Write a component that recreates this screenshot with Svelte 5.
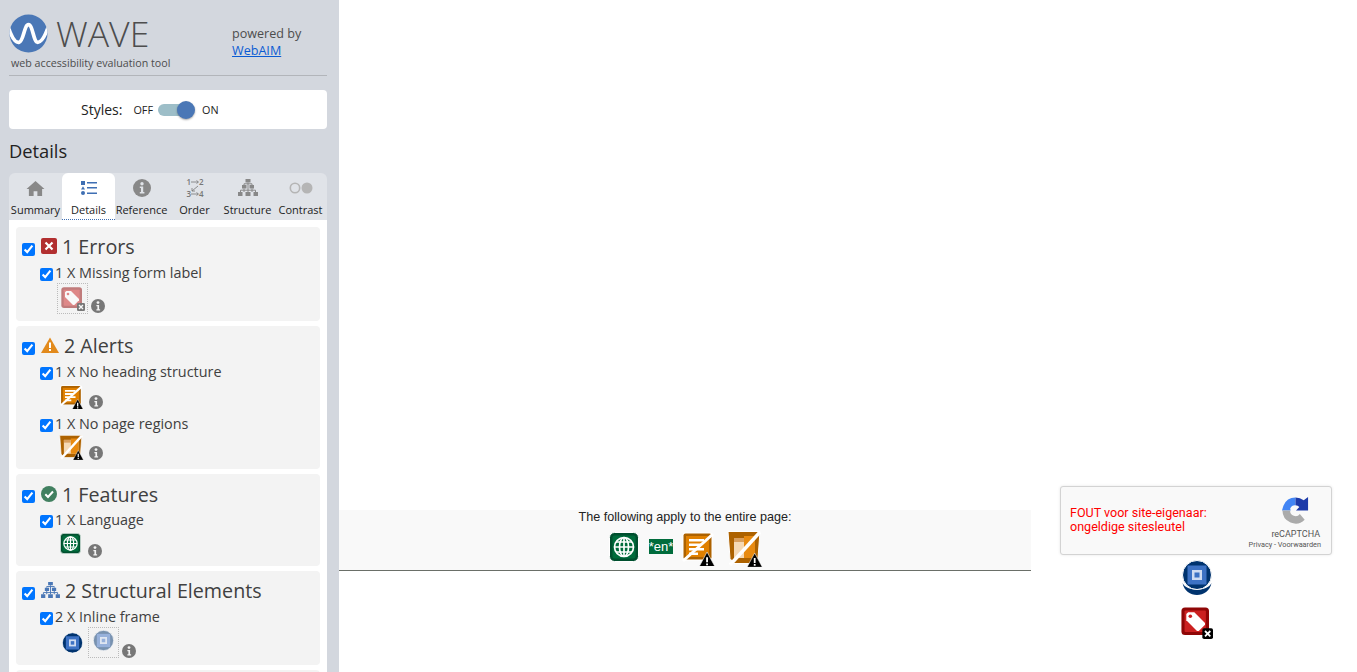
<script>
  const tabs = ["Summary", "Details", "Reference", "Order", "Structure", "Contrast"];
</script>

{#snippet info()}
  <svg class="info" viewBox="0 0 14 14" width="14" height="14" aria-hidden="true">
    <circle cx="7" cy="7" r="7" fill="#777" />
    <circle cx="7" cy="3.600" r="1.400" fill="#f3f3f3" />
    <path d="M5.400 6h2.700v4.200h1v1.300H5.400v-1.300h1V7.300h-1z" fill="#f3f3f3" />
  </svg>
{/snippet}

{#snippet globe(size)}
  <svg viewBox="0 0 30 30" width={size} height={size} aria-hidden="true">
    <rect x="0.500" y="0.500" width="29" height="29" rx="5" fill="#00502f" stroke="#fff" />
    <rect x="3.500" y="3.500" width="23" height="23" rx="2" fill="#006c3c" />
    <g fill="none" stroke="#fff" stroke-width="1.700">
      <circle cx="15" cy="15" r="9.500" />
      <ellipse cx="15" cy="15" rx="4.500" ry="9.500" />
      <path d="M15 5.500v19M5.500 15h19M7 10h16M7 20h16" />
    </g>
  </svg>
{/snippet}

{#snippet warn(x, y, s)}
  <g transform="translate({x} {y}) scale({s})">
    <path d="M7 0 14 13H0z" fill="#000" stroke="#fff" stroke-width="0.500" />
    <path d="M6.200 4.500h1.600v4.500H6.200zM6.200 10h1.600v1.500H6.200z" fill="#fff" />
  </g>
{/snippet}

{#snippet heading(w)}
  <svg viewBox="0 0 34 34" width={w} height={w} aria-hidden="true">
    <rect x="0.500" y="0.500" width="30" height="28" rx="3" fill="#fff" />
    <rect x="1.500" y="1.500" width="28" height="26" rx="2" fill="#ad6200" />
    <rect x="4" y="4" width="23" height="21" fill="#e08000" />
    <path d="M7 7h15v2.500H7zM7 11.500h12V14H7zM7 16h15v2.500H7zM7 20.500h9V23H7z" fill="#fff" />
    <path d="M1 29 31 2" stroke="#fff" stroke-width="3" />
    {@render warn(17, 20, 1.150)}
  </svg>
{/snippet}

{#snippet regions(w)}
  <svg viewBox="0 0 36 36" width={w} height={w} aria-hidden="true">
    <path d="M1 0.500h32l-2 27-4 5H7l-4-5z" fill="#ad6200" stroke="#fff" />
    <path d="M7 7h21v20H7z" fill="#f5d9b5" />
    <path d="M17 5h11v22H17z" fill="#e88a10" />
    <path d="M7 7h10v4H7z" fill="#d9a060" />
    <path d="M3 34 33 1" stroke="#fff" stroke-width="3.500" />
    {@render warn(20, 22, 1.100)}
  </svg>
{/snippet}

{#snippet iframe(w, shadow = false, faded = false)}
  <svg class:faded viewBox="0 0 30 36" width={w} aria-hidden="true">
    {#if shadow}
      <path d="M0.500 23c3 16 26 16 29 0-4 9-25 9-29 0z" fill="#00336e" />
    {/if}
    <circle cx="15" cy="15" r="14.500" fill="#00336e" stroke="#fff" />
    <rect x="5.500" y="5.500" width="19" height="19" fill="#3d72c4" />
    <rect x="10" y="10" width="10" height="10" fill="#cfdcf2" />
    <rect x="12.500" y="12.500" width="5" height="5" fill="#3d72c4" />
  </svg>
{/snippet}

{#snippet tag(w, small = false)}
  <svg class:faded={small} viewBox="0 0 36 36" width={w} height={w} aria-hidden="true">
    <rect x="0.500" y="0.500" width="31" height="31" rx="4" fill="#8f0606" />
    <rect x="4" y="4" width="24" height="24" rx="1" fill="#cb2020" />
    <path d="M6 8 8 6h7l12 12v2l-7 7h-2L6 15z" fill="#fff" />
    <circle cx="10.500" cy="10.500" r="2" fill="#cb2020" />
    <rect x="24" y="24" width="12" height="12" rx="2" fill="#000" />
    <path d="M27 27l6 6M33 27l-6 6" stroke="#fff" stroke-width="2" />
  </svg>
{/snippet}

<div class="page">
  <aside class="sidebar">
    <header class="brand">
      <div class="logo">
        <div class="logo-row">
          <svg viewBox="0 0 40 40" width="39" height="39" aria-hidden="true">
            <defs><clipPath id="logo-clip"><circle cx="20" cy="20" r="19.500" /></clipPath></defs>
            <circle cx="20" cy="20" r="19.500" fill="#4a77b6" />
            <path clip-path="url(#logo-clip)" d="M-1 13C3 25 7 30 10.500 29C15 28 15.500 11 20 11C24.500 11 25 29 29.500 29C33 29 37 23 41 11" fill="none" stroke="#fff" stroke-width="3.800" />
          </svg>
          <span class="wave">WAVE</span>
        </div>
        <div class="tagline">web accessibility evaluation tool</div>
      </div>
      <div class="powered">powered by<br /><a href="#top">WebAIM</a></div>
    </header>

    <div class="styles-card">
      <span class="styles-label">Styles:</span>
      <span class="off">OFF</span>
      <span class="switch"><span class="knob"></span></span>
      <span class="on">ON</span>
    </div>

    <h2 class="details-title">Details</h2>

    <nav class="tabs">
      {#each tabs as t, i}
        <div class="tab" class:active={i === 1}>
          <span class="tab-icon">
            {#if i === 0}
              <svg viewBox="0 0 20 18" width="19" height="17" aria-hidden="true"><path d="M10 1 0.500 9.500H3V17h5v-5h4v5h5V9.500h2.500z" fill="#888" /></svg>
            {:else if i === 1}
              <svg viewBox="0 0 18 16" width="18" height="16" aria-hidden="true"><path d="M1 1h4v4H1zM7 2h10v1.500H7zM7 7h10v1.500H7zM7 12.500h10V14H7z" fill="#3f6fb3" /><path d="M3 6.200 5 9.500H1z" fill="#3f6fb3" /><circle cx="3" cy="13" r="2" fill="#3f6fb3" /></svg>
            {:else if i === 2}
              <svg viewBox="0 0 18 18" width="18" height="18" aria-hidden="true"><circle cx="9" cy="9" r="9" fill="#888" /><circle cx="9" cy="4.700" r="1.700" fill="#e0e3e8" /><path d="M6.800 7.500h3.400v5.500h1.200v1.500H6.800V13H8V9H6.800z" fill="#e0e3e8" /></svg>
            {:else if i === 3}
              <svg class="order-icon" viewBox="0 0 18 20" width="18" height="20" aria-hidden="true">
                <text x="0.500" y="6.500" class="ord">1</text><text x="13" y="6.500" class="ord">2</text>
                <text x="0.500" y="19" class="ord">3</text><text x="13" y="19" class="ord">4</text>
                <path d="M5 4h7M10.500 2.500 12.500 4 10.500 5.500M5 16h7M10.500 14.500 12.500 16 10.500 17.500M12 8l-6 5M6 10V13h3" fill="none" stroke="#777" stroke-width="0.800" />
              </svg>
            {:else if i === 4}
              <svg viewBox="0 0 20 18" width="20" height="18" aria-hidden="true"><path d="M7.500 0h5v3.500h-5zM4 6h4.500v3.500H4zM11.500 6H16v3.500h-4.500zM0 13h4.500v4H0zM7.500 13h5v4h-5zM15.500 13H20v4h-4.500z" fill="#888" /><path d="M10 3.500V13M6 9.500V13M14 9.500V13M2.500 13v-1.800h15V13M6 6V4.800h8V6" fill="none" stroke="#888" /></svg>
            {:else}
              <svg viewBox="0 0 24 12" width="24" height="12" aria-hidden="true"><circle cx="6" cy="6" r="4.700" fill="none" stroke="#b5b5b5" stroke-width="1.600" /><circle cx="18" cy="6" r="5.500" fill="#b5b5b5" /></svg>
            {/if}
          </span>
          <span class="tab-label">{t}</span>
        </div>
      {/each}
    </nav>

    <div class="panel">
      <section class="card card-errors">
        <h3><input type="checkbox" checked />
          <svg class="head-icon" viewBox="0 0 16 16" width="16" height="16" aria-hidden="true"><rect width="16" height="16" rx="2" fill="#b22f30" /><path d="M4.500 4.500l7 7M11.500 4.500l-7 7" stroke="#fff" stroke-width="2.200" /></svg>
          1 Errors</h3>
        <div class="row"><input type="checkbox" checked /><span>1 X Missing form label</span></div>
        <div class="icons first-icons">
          <span class="dotted">{@render tag(24, true)}</span>
          {@render info()}
        </div>
      </section>

      <section class="card card-alerts">
        <h3><input type="checkbox" checked />
          <svg class="head-icon" viewBox="0 0 18 16" width="18" height="16" aria-hidden="true"><path d="M9 0.500 18 16H0z" fill="#e28a1c" /><path d="M8 5.500h2v5.500H8zM8 12h2v2H8z" fill="#fff" /></svg>
          2 Alerts</h3>
        <div class="row"><input type="checkbox" checked /><span>1 X No heading structure</span></div>
        <div class="icons plain">{@render heading(24)}{@render info()}</div>
        <div class="row second"><input type="checkbox" checked /><span>1 X No page regions</span></div>
        <div class="icons plain wide">{@render regions(25)}{@render info()}</div>
      </section>

      <section class="card card-features">
        <h3><input type="checkbox" checked />
          <svg class="head-icon" viewBox="0 0 16 16" width="16" height="16" aria-hidden="true"><circle cx="8" cy="8" r="8" fill="#418060" /><path d="M4.300 8.300 7 11l5-5.500" fill="none" stroke="#fff" stroke-width="2" /></svg>
          1 Features</h3>
        <div class="row"><input type="checkbox" checked /><span>1 X Language</span></div>
        <div class="icons plain lang-row">{@render globe(21)}{@render info()}</div>
      </section>

      <section class="card card-structure">
        <h3><input type="checkbox" checked />
          <svg class="head-icon" viewBox="0 0 20 18" width="19" height="17" aria-hidden="true"><path d="M7.500 0h5v3.500h-5zM4 6h4.500v3.500H4zM11.500 6H16v3.500h-4.500zM0 13h4.500v4H0zM7.500 13h5v4h-5zM15.500 13H20v4h-4.500z" fill="#4a77b6" /><path d="M10 3.500V13M6 9.500V13M14 9.500V13M2.500 13v-1.800h15V13M6 6V4.800h8V6" fill="none" stroke="#4a77b6" /></svg>
          2 Structural Elements</h3>
        <div class="row"><input type="checkbox" checked /><span>2 X Inline frame</span></div>
        <div class="icons frames">
          <span class="frame-solid">{@render iframe(21)}</span>
          <span class="dotted">{@render iframe(21, false, true)}</span>
          {@render info()}
        </div>
      </section>

      <section class="card card-next"></section>
    </div>
  </aside>

  <main class="content">
    <div class="page-strip">
      <p>The following apply to the entire page:</p>
      <div class="strip-icons">
        <span class="strip-globe">{@render globe(30)}</span>
        <span class="lang">*en*</span>
        <span class="raised heading-icon">{@render heading(34)}</span>
        <span class="raised">{@render regions(36)}</span>
      </div>
    </div>
  </main>

  <div class="side-col">
    <div class="recaptcha">
      <div class="fout">FOUT voor site-eigenaar:<br />ongeldige sitesleutel</div>
      <div class="rc-brand">
        <svg viewBox="0 0 30 30" width="29" height="29" aria-hidden="true">
          <path d="M15 1.500A13.500 13.500 0 0 0 2.500 10L1 15H10L9.500 13A5.500 5.500 0 0 1 15 9.500z" fill="#4285f4" />
          <path d="M15 1.500A13.500 13.500 0 0 1 23.500 4.500L28 1V15H15.500L19 11.500A5.500 5.500 0 0 0 15 9.500z" fill="#1c3aa9" />
          <path d="M1.500 15H9.500A5.500 5.500 0 0 0 19.500 18.500L24.500 24.500A13.500 13.500 0 0 1 1.500 15z" fill="#ababab" />
        </svg>
        <div class="rc-name">reCAPTCHA</div>
        <div class="rc-links">Privacy - Voorwaarden</div>
      </div>
    </div>
    <div class="side-icon first">{@render iframe(30, true)}</div>
    <div class="side-icon">{@render tag(32)}</div>
  </div>
</div>

<style>
  :global(body) {
    margin: 0;
    background: #fff;
  }

  .page {
    display: flex;
    width: 1357px;
    height: 672px;
    overflow: hidden;
  }

  /* --- Sidebar --- */
  .sidebar {
    flex: none;
    box-sizing: border-box;
    width: 339px;
    height: 672px;
    padding: 0 12px 0 9px;
    background: #d3d7de;
    font-family: "Open Sans", sans-serif;
    color: #404040;
    overflow: hidden;
  }

  .brand {
    display: flex;
    height: 75px;
    border-bottom: 1px solid #b2b5ba;
  }
  .logo {
    width: 223px;
    padding-top: 13px;
  }
  .logo-row {
    display: flex;
    align-items: center;
    height: 40px;
  }
  .wave {
    margin-left: 8px;
    font-size: 35.600px;
    font-weight: 300;
    line-height: 40px;
    color: #4d4d4d;
  }
  .tagline {
    margin: 3px 0 0 2px;
    font-size: 10.700px;
    line-height: 15px;
    color: #4d4d4d;
  }
  .powered {
    padding-top: 25px;
    font-size: 12.600px;
    line-height: 17px;
    color: #4d4d4d;
  }
  .powered a {
    color: #0a5bd3;
  }

  .styles-card {
    display: flex;
    align-items: center;
    height: 39px;
    margin-top: 14px;
    padding-left: 72px;
    background: #fff;
    border-radius: 4px;
    color: #222;
  }
  .styles-label {
    font-size: 14px;
    margin-right: 11px;
  }
  .off,
  .on {
    font-size: 10.800px;
  }
  .switch {
    position: relative;
    width: 28px;
    height: 12px;
    margin: 0 0 0 5px;
    background: #9dbec8;
    border-radius: 6px;
  }
  .knob {
    position: absolute;
    top: -3px;
    right: -9px;
    width: 18px;
    height: 18px;
    background: #4a77b6;
    border-radius: 50%;
    box-shadow: 0 1px 2px rgba(0, 0, 0, 0.35);
  }
  .on {
    margin-left: 16px;
  }

  .details-title {
    margin: 8px 0 9px;
    font-size: 18.300px;
    font-weight: 400;
    line-height: 27px;
    color: #222;
  }

  .tabs {
    display: flex;
    height: 47px;
    padding: 0 2px 0 0;
    background: #e0e3e8;
    border-radius: 6px 6px 0 0;
  }
  .tab {
    flex: 0 0 53px;
    display: flex;
    flex-direction: column;
    align-items: center;
    box-sizing: border-box;
    height: 47px;
    color: #222;
  }
  .tab.active {
    background: #fff;
    border-radius: 6px 6px 0 0;
    border-bottom: 1px dotted #3f6fb3;
  }
  .tab-icon {
    display: flex;
    align-items: center;
    justify-content: center;
    height: 30px;
  }
  .tab-label {
    font-size: 11px;
    line-height: 14px;
    white-space: nowrap;
  }
  .order-icon {
    overflow: visible;
  }
  .ord {
    font: 600 8px "Open Sans", sans-serif;
    fill: #777;
  }

  .panel {
    display: flex;
    flex-direction: column;
    gap: 5px;
    box-sizing: border-box;
    height: 460px;
    padding: 7px 7px 0;
    background: #fff;
  }

  .card {
    flex: none;
    box-sizing: border-box;
    padding: 8px 0 0 6px;
    background: #f3f3f3;
    border-radius: 4px;
  }
  .card-errors { height: 94px; }
  .card-alerts { height: 143px; }
  .card-features { height: 92px; padding-top: 9px; }
  .card-features .row { margin-top: 3px; }
  .card-structure { height: 94px; }
  .card-next { height: 30px; }

  h3 {
    display: flex;
    align-items: center;
    height: 24px;
    margin: 0;
    font-size: 19.700px;
    font-weight: 400;
    line-height: 24px;
    color: #404040;
    white-space: nowrap;
  }
  input[type="checkbox"] {
    flex: none;
    width: 13px;
    height: 13px;
    margin: 0;
    accent-color: #0075ff;
  }
  h3 input[type="checkbox"] {
    margin: 4px 6px 0 0;
  }
  .card-features h3 input[type="checkbox"] {
    margin-top: 2px;
  }
  .head-icon {
    flex: none;
    margin: -2px 5px 0 0;
  }

  .row {
    display: flex;
    align-items: center;
    height: 20px;
    margin: 4px 0 0 18px;
    font-size: 14.400px;
    color: #404040;
    white-space: nowrap;
  }
  .row input[type="checkbox"] {
    margin: 3px 2px 0 0;
  }
  .row span {
    line-height: 20px;
  }
  .row.second {
    margin-top: 5px;
  }

  .icons {
    display: flex;
    align-items: flex-end;
    margin-left: 35px;
  }
  .info {
    flex: none;
    margin-left: 3px;
  }
  .dotted {
    display: flex;
    align-items: center;
    justify-content: center;
    box-sizing: border-box;
    width: 31px;
    height: 31px;
    border: 1px dotted #bbb;
  }
  .first-icons .info {
    margin-bottom: 1px;
  }
  .plain {
    height: 25px;
    margin-left: 38px;
    padding-top: 2px;
  }
  .plain .info {
    margin-left: 5px;
  }
  .plain.wide {
    height: 24px;
    margin-left: 37px;
  }
  .plain.lang-row {
    align-items: flex-start;
    padding-top: 3px;
  }
  .plain.lang-row .info {
    margin: 11px 0 0 7px;
  }
  .frames {
    margin-left: 39px;
  }
  .frame-solid {
    display: flex;
    width: 27px;
    height: 31px;
    padding-top: 5px;
    padding-left: 1px;
    box-sizing: border-box;
  }
  .faded {
    opacity: 0.5;
  }

  /* --- Page content strip --- */
  .content {
    flex: none;
    width: 692px;
    padding-top: 510px;
    font-family: "Liberation Sans", Arial, sans-serif;
  }
  .page-strip {
    box-sizing: border-box;
    height: 61px;
    background: #f9f9f9;
    border-bottom: 1px solid #6a6f68;
    text-align: center;
    color: #222;
  }
  .page-strip p {
    margin: 0;
    font-size: 12.600px;
    line-height: 14px;
  }
  .strip-icons {
    display: flex;
    align-items: center;
    justify-content: center;
    height: 36px;
    margin-top: 5px;
    padding-left: 2px;
  }
  .strip-icons span {
    flex: none;
    display: flex;
  }
  .strip-globe {
    margin-right: 10px;
  }
  .raised {
    margin-top: 4px;
  }
  .heading-icon {
    margin-right: 11px;
  }
  .lang {
    margin: -2px 9px 0 0;
    background: #006c3c;
    color: #fff;
    font-size: 13px;
    line-height: 15px;
  }

  /* --- Right column --- */
  .side-col {
    flex: none;
    display: flex;
    flex-direction: column;
    align-items: center;
    width: 272px;
    margin-left: 29px;
    padding-top: 486px;
  }
  .recaptcha {
    flex: none;
    display: flex;
    justify-content: space-between;
    box-sizing: border-box;
    width: 272px;
    height: 69px;
    padding: 0 10px 0 9px;
    background: #f9f9f9;
    border: 1px solid #d3d3d3;
    border-radius: 3px;
    box-shadow: 0 0 3px rgba(0, 0, 0, 0.1);
    font-family: "Roboto", Arial, sans-serif;
  }
  .fout {
    padding-top: 19px;
    font-size: 12.550px;
    line-height: 14px;
    color: #f00;
  }
  .rc-brand {
    display: flex;
    flex-direction: column;
    align-items: flex-end;
    padding-top: 9px;
    color: #555;
  }
  .rc-brand svg {
    margin-right: 11px;
  }
  .rc-name {
    margin-right: 1px;
    font-size: 9px;
    line-height: 11px;
    margin-top: 4px;
  }
  .rc-links {
    margin-top: 0;
    font-size: 7.300px;
    line-height: 9px;
    white-space: nowrap;
  }
  .side-icon {
    height: 36px;
    padding-left: 1px;
  }
  .side-icon.first {
    margin-top: 5px;
    height: 47px;
  }
</style>
